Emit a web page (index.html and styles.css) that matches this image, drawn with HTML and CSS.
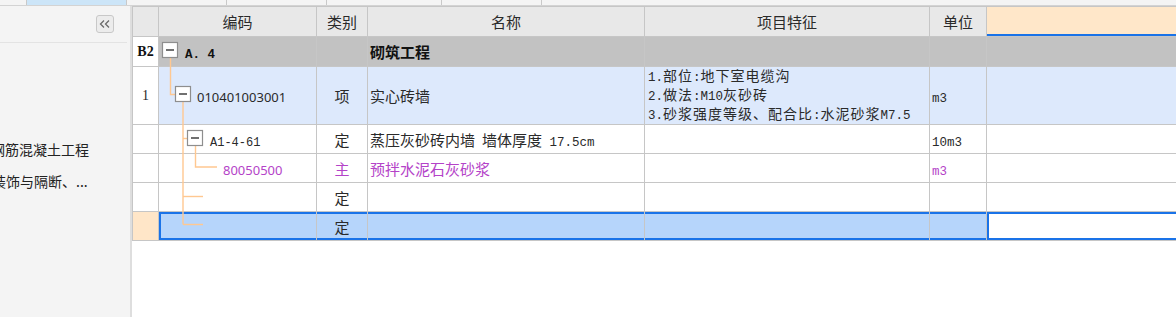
FILE: index.html
```html
<!DOCTYPE html>
<html lang="zh">
<head>
<meta charset="utf-8">
<link rel="stylesheet" href="styles.css">
</head>
<body>
<div class="tabs">
  <div class="tab w26"></div>
  <div class="tab w99 on"></div>
  <div class="tab w99"></div>
  <div class="tab w99"></div>
  <div class="tab w114"></div>
  <div class="tab w99"></div>
</div>
<div class="main">
  <aside class="side">
    <div class="side-head">
      <div class="collapse">
        <svg width="16" height="16" viewBox="0 0 16 16"><polyline points="7,4.5 3.5,8 7,11.5" fill="none" stroke="#6a6a6a" stroke-width="1.3"/><polyline points="12,4.5 8.5,8 12,11.5" fill="none" stroke="#6a6a6a" stroke-width="1.3"/></svg>
      </div>
    </div>
    <div class="items">
      <div class="item i1">钢筋混凝土工程</div>
      <div class="item i2">装饰与隔断、...</div>
    </div>
  </aside>
  <div class="grid">
    <table class="sheet">
      <colgroup>
        <col class="c-rn"><col class="c-code"><col class="c-type"><col class="c-name"><col class="c-feat"><col class="c-unit"><col class="c-rest">
      </colgroup>
      <thead>
        <tr class="hd">
          <th class="rn"></th><th>编码</th><th>类别</th><th>名称</th><th>项目特征</th><th>单位</th><th class="cur-h"></th>
        </tr>
      </thead>
      <tbody>
        <tr class="r-sec">
          <td class="rn rn-w b2">B2</td>
          <td class="code p26"><span class="sec-code">A. 4</span></td>
          <td></td>
          <td class="name"><b class="sec-name">砌筑工程</b></td>
          <td></td><td></td><td></td>
        </tr>
        <tr class="r-item">
          <td class="rn rn-w serif">1</td>
          <td class="code p38"><span class="num">010401003001</span></td>
          <td class="ctr">项</td>
          <td class="name">实心砖墙</td>
          <td class="feat">
            <div class="fl"><span class="m">1.</span>部位<span class="m">:</span>地下室电缆沟</div>
            <div class="fl"><span class="m">2.</span>做法<span class="m">:M10</span>灰砂砖</div>
            <div class="fl"><span class="m">3.</span>砂浆强度等级、配合比<span class="m">:</span>水泥砂浆<span class="m">M7.5</span></div>
          </td>
          <td class="unit"><span class="m">m3</span></td>
          <td></td>
        </tr>
        <tr class="r-n">
          <td class="rn"></td>
          <td class="code p51"><span class="m mono12">A1-4-61</span></td>
          <td class="ctr">定</td>
          <td class="name">蒸压灰砂砖内墙<span class="sp"></span>墙体厚度<span class="m"> 17.5cm</span></td>
          <td></td>
          <td class="unit"><span class="m">10m3</span></td>
          <td></td>
        </tr>
        <tr class="r-n purple">
          <td class="rn"></td>
          <td class="code p64"><span class="num">80050500</span></td>
          <td class="ctr">主</td>
          <td class="name">预拌水泥石灰砂浆</td>
          <td></td>
          <td class="unit"><span class="m">m3</span></td>
          <td></td>
        </tr>
        <tr class="r-n">
          <td class="rn"></td>
          <td class="code"></td>
          <td class="ctr">定</td>
          <td></td><td></td><td></td><td></td>
        </tr>
        <tr class="r-sel">
          <td class="rn rn-o"></td>
          <td class="s s-first"></td>
          <td class="s ctr">定</td>
          <td class="s"></td>
          <td class="s"></td>
          <td class="s s-last"></td>
          <td class="cur"></td>
        </tr>
      </tbody>
    </table>
    <svg class="tree" width="1044" height="311" viewBox="132 6 1044 311">
      <g fill="none" stroke="#ffc891" stroke-width="1.4">
        <path d="M170.5 58 V94.5 H175"/>
        <path d="M183 102 V224.5"/>
        <path d="M183 138.5 H187"/>
        <path d="M183 196.5 H203"/>
        <path d="M183 224.5 H203"/>
        <path d="M195.5 146 V167 H217"/>
      </g>
      <g fill="#fff" stroke="#8e8e8e" stroke-width="1.2">
        <rect x="162.5" y="42.5" width="15" height="15"/>
        <rect x="175.5" y="86.5" width="15" height="15"/>
        <rect x="187.5" y="130.5" width="15" height="15"/>
      </g>
      <g stroke="#333" stroke-width="1.4">
        <path d="M166 50 H174"/>
        <path d="M179 94 H187"/>
        <path d="M191 138 H199"/>
      </g>
    </svg>
  </div>
</div>
</body>
</html>
```
FILE: styles.css
```css
* { box-sizing: border-box; }
html, body { margin: 0; padding: 0; }
body {
  width: 1176px;
  height: 317px;
  overflow: hidden;
  background: #fff;
  font-family: "Noto Sans CJK SC", "Noto Sans", sans-serif;
  color: #333;
}
.tabs {
  display: flex;
  height: 6px;
  background: #f4f4f4;
  border-bottom: 1px solid #d3d3d3;
}
.tab { height: 5px; border-right: 1px solid #c9c9c9; flex: none; }
.tab.on { background: #cce5f8; }
.w26 { width: 27px; }
.w99 { width: 100px; }
.w114 { width: 115px; }

.main { display: flex; height: 311px; }
.side {
  flex: none;
  width: 132px;
  background: #f4f4f4;
  border-right: 2px solid #dedede;
  overflow: hidden;
}
.side-head {
  height: 37px;
  margin-right: 3px;
  border-bottom: 1px solid #e3e3e3;
  display: flex;
  align-items: center;
  justify-content: flex-end;
  padding-right: 13px;
}
.collapse {
  width: 18px;
  height: 18px;
  border: 1px solid #c8c8c8;
  border-radius: 3px;
  background: #ececec;
  display: flex;
  align-items: center;
  justify-content: center;
}
.collapse svg { display: block; }
.items { margin-top: 90px; }
.item {
  height: 32px;
  line-height: 32px;
  font-size: 14px;
  color: #222;
  white-space: nowrap;
}
.i1 { text-indent: -9px; }
.i2 { text-indent: -8px; }

.grid { position: relative; flex: 1; overflow: hidden; }
.tree { position: absolute; left: 0; top: 0; pointer-events: none; }
.sheet {
  border-collapse: collapse;
  table-layout: fixed;
  width: 1060px;
}
.c-rn { width: 26px; }
.c-code { width: 158px; }
.c-type { width: 51px; }
.c-name { width: 277px; }
.c-feat { width: 285px; }
.c-unit { width: 57px; }
.c-rest { width: 206px; }
.sheet th, .sheet td {
  border: 1px solid #c6c6c6;
  padding: 0 2px;
  white-space: nowrap;
  overflow: hidden;
  font-weight: normal;
  font-size: 15px;
  color: #2a2a2a;
  vertical-align: middle;
}
.hd th { height: 30px; background: #e8e8e8; text-align: center; }
.hd th.cur-h { background: #ffe7c9; box-shadow: inset 0 -2px 0 #1a73e8; }

.r-sec td { height: 30px; background: #c2c2c2; }
.r-item td { height: 58px; background: #dde9fc; }
.r-n td { height: 29px; background: #fff; }
.r-sel td { height: 29px; }
.sheet td.rn { background: #fff; text-align: center; padding: 0; }
.sheet td.rn-o { background: #ffe6c8; }
.sheet td.b2 { font-family: "Liberation Serif", serif; font-weight: bold; font-size: 14px; color: #111; }
.sheet td.serif { font-family: "Liberation Serif", serif; font-size: 14px; }

.sheet td.p26 { padding-left: 26px; }
.sheet td.p38 { padding-left: 38px; }
.sheet td.p51 { padding-left: 51px; }
.sheet td.p64 { padding-left: 64px; }

.sec-code { font-family: "Liberation Mono", monospace; font-weight: bold; font-size: 12.5px; color: #111; }
.sec-name { font-weight: bold; font-size: 15px; color: #111; }
.num { font-family: "Noto Sans", sans-serif; font-size: 13px; }
.m.mono12 { font-size: 12px; }
.ctr { text-align: center; }
.name { padding-left: 2px; }
.sp { display: inline-block; width: 7px; }

.sheet td.feat { padding-left: 3px; }
.fl { font-size: 14px; letter-spacing: 1px; line-height: 16px; }
.m { font-family: "Liberation Mono", monospace; font-size: 12.5px; letter-spacing: 0; }
.unit { padding-left: 2px; }

.sheet .purple td { color: #b443c8; }

.r-sel td.s { background: #b6d5fb; box-shadow: inset 0 2px 0 #1a73e8, inset 0 -2px 0 #1a73e8; }
.r-sel td.s-first { box-shadow: inset 2px 0 0 #1a73e8, inset 0 2px 0 #1a73e8, inset 0 -2px 0 #1a73e8; }
.r-sel td.cur { background: #fff; box-shadow: inset 0 0 0 2px #1a73e8; }
```
